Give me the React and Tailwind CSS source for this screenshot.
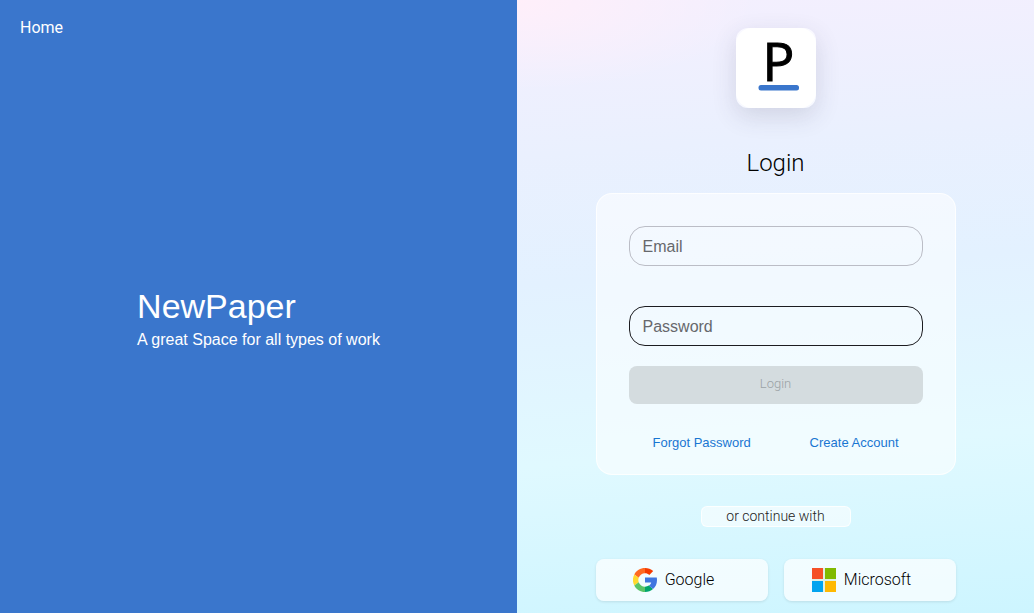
import React from "react";

function Logo() {
  return (
    <div className="size-20 rounded-xl bg-white/60 shadow-[0_8px_24px_rgba(60,65,90,0.16)]">
      <svg viewBox="0 0 80 80" className="size-20 overflow-visible" role="img" aria-label="NewPaper">
        <rect width="80" height="80" rx="16" fill="#fff" />
        <text
          x="26.5"
          y="53"
          fontFamily="'Open Sans', sans-serif"
          fontSize="53"
          fill="#000"
          stroke="#000"
          strokeWidth="1"
        >
          P
        </text>
        <rect x="22.5" y="57" width="40.5" height="5.5" rx="2.5" fill="#3a76cc" />
      </svg>
    </div>
  );
}

function GoogleIcon() {
  return (
    <svg viewBox="0 0 24 24" className="size-6" aria-hidden="true">
      <path d="M12 0v5.300c1.700 0 3.100.6 4.300 1.600L20.200 3.100C18 1.100 15.100 0 12 0z" fill="#f53b00" />
      <path d="M12 0C7.300 0 3.300 2.600 1.300 6.500l4.400 3.300C6.700 7.100 9.100 5.300 12 5.300z" fill="#ff6a22" />
      <path d="M1.300 6.500a12 12 0 0 0 0 11l4.400-3.300a6.800 6.800 0 0 1 0-4.400z" fill="#ffd92e" />
      <path d="M1.300 17.500C3.300 21.400 7.300 24 12 24v-5.300c-2.900 0-5.300-1.800-6.300-4.500z" fill="#5bc468" />
      <path d="M12 24c3.200 0 6-1.100 8-2.900l-4.100-3.500c-1.100.7-2.400 1.100-3.900 1.100z" fill="#00a66c" />
      <path d="M12 9.600h11.750c.15.8.25 1.600.25 2.500 0 3.800-1.400 7-4 9l-4.100-3.500c1.300-.8 2-1.900 2.300-3.200H12z" fill="#3f76e0" />
    </svg>
  );
}

function MicrosoftIcon() {
  return (
    <svg viewBox="0 0 24 24" className="size-6" aria-hidden="true">
      <rect width="24" height="24" fill="#dff0e4" />
      <rect width="11" height="11" fill="#f55027" />
      <rect x="13" width="11" height="11" fill="#80ba00" />
      <rect y="13" width="11" height="11" fill="#02a4ef" />
      <rect x="13" y="13" width="11" height="11" fill="#ffb902" />
    </svg>
  );
}

function Field({ id, label, type, className }) {
  return (
    <div className="relative">
      <input
        id={id}
        type={type}
        placeholder=" "
        className={
          "peer block h-10 w-full rounded-2xl border bg-transparent px-3 text-base text-black outline-none " + className
        }
      />
      <label
        htmlFor={id}
        className="pointer-events-none absolute inset-y-0 left-[14px] hidden items-center pt-0.5 text-base text-[#66686c] peer-placeholder-shown:flex"
      >
        {label}
      </label>
    </div>
  );
}

function ProviderButton({ icon, children }) {
  return (
    <button
      type="button"
      className="flex h-[42px] flex-1 items-center justify-center gap-2 rounded-lg bg-white/70 pr-4 font-['Roboto',sans-serif] text-base font-light text-black shadow-[0_1px_3px_rgba(0,0,0,0.1)]"
    >
      {icon}
      {children}
    </button>
  );
}

export default function App() {
  return (
    <div className="grid min-h-screen grid-cols-2 font-['Liberation_Sans',Arial,sans-serif]">
      <section className="flex flex-col bg-[#3a76cc] text-white">
        <nav className="flex h-14 items-center px-5">
          <a href="#home" className="font-['Roboto',sans-serif] text-base leading-6">
            Home
          </a>
        </nav>
        <div className="flex flex-1 items-center justify-center pb-[34px]">
          <div>
            <h1 className="text-[34px] leading-11">NewPaper</h1>
            <p className="text-base leading-6">A great Space for all types of work</p>
          </div>
        </div>
      </section>

      <main className="flex flex-col items-center bg-[radial-gradient(ellipse_240px_90px_at_0%_0%,#ffeffa_0%,transparent_100%),linear-gradient(176deg,#f4effe_0%,#eaf0fe_24%,#e3f1ff_44%,#e0f9ff_72%,#cdf5ff_100%)] pt-7 pb-3">
        <Logo />
        <h2 className="mt-[39px] font-['Roboto',sans-serif] text-2xl leading-8 font-light text-black">Login</h2>

        <form className="mt-[14px] w-full max-w-[360px] rounded-2xl border border-white/80 bg-white/55 px-8 pt-8 pb-4">
          <Field id="email" label="Email" type="email" className="border-[#bbbdc6]" />
          <div className="mt-10">
            <Field id="password" label="Password" type="password" className="border-[#1c1c20]" />
          </div>
          <button
            type="submit"
            disabled
            className="mt-5 block h-[38px] w-full rounded-lg bg-[#d4dcdf] pb-0.5 font-['Roboto',sans-serif] text-[13px] font-light text-[#9ba2a5]"
          >
            Login
          </button>
          <div className="mt-6 flex justify-between px-6 text-[13px] leading-[30px] text-[#1976d2]">
            <a href="#forgot">Forgot Password</a>
            <a href="#create">Create Account</a>
          </div>
        </form>

        <p className="mt-[31px] h-[21px] w-[150px] rounded-md border border-white/80 bg-white/55 text-center font-['Roboto',sans-serif] text-sm leading-[18px] font-light text-[#222]">
          or continue with
        </p>

        <div className="mt-8 flex w-full max-w-[360px] gap-4">
          <ProviderButton icon={<GoogleIcon />}>Google</ProviderButton>
          <ProviderButton icon={<MicrosoftIcon />}>Microsoft</ProviderButton>
        </div>
      </main>
    </div>
  );
}
